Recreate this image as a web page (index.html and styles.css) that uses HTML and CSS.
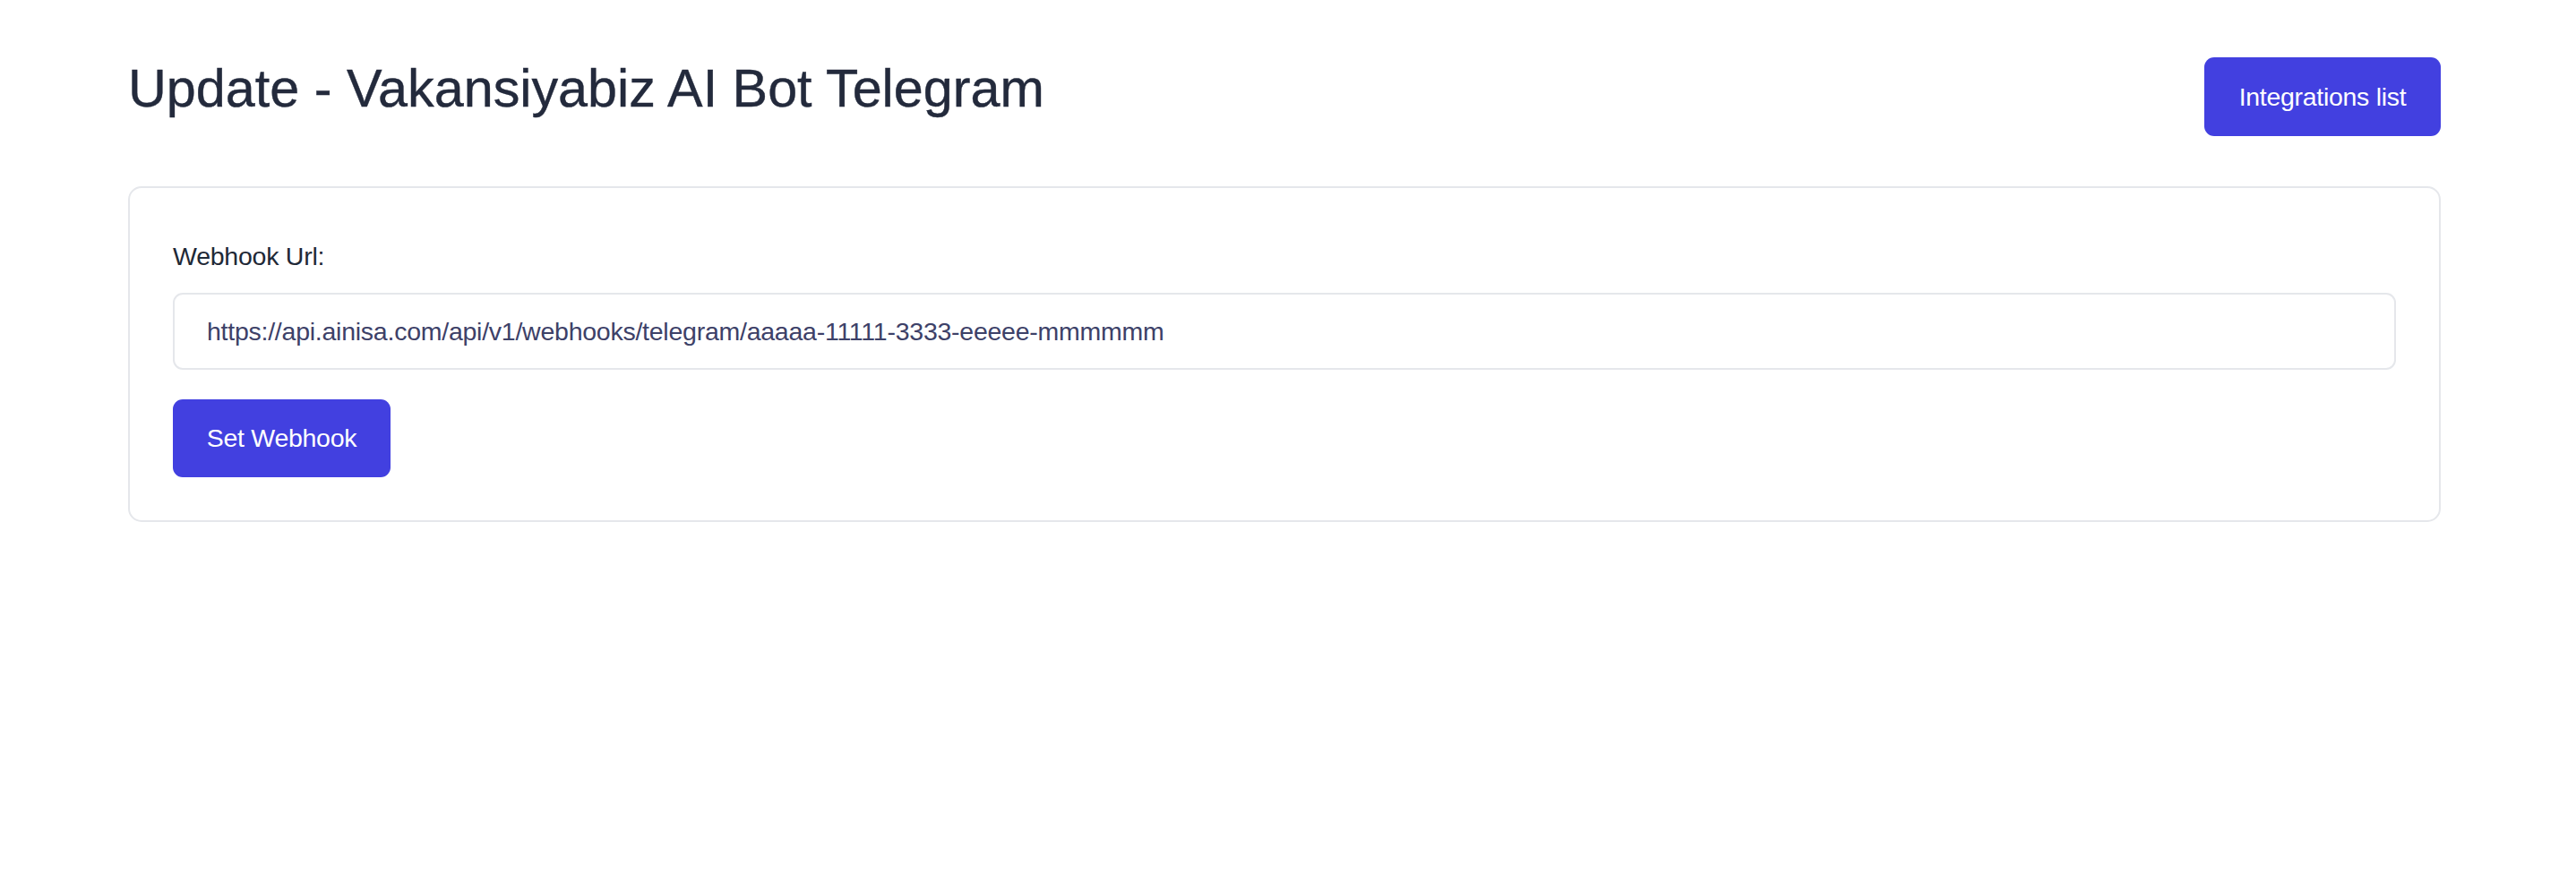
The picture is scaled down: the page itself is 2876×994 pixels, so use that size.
FILE: index.html
```html
<!DOCTYPE html>
<html lang="en">
<head>
<meta charset="utf-8">
<title>Update - Vakansiyabiz AI Bot Telegram</title>
<link rel="stylesheet" href="styles.css">
</head>
<body>
<main class="page">
  <header class="page-header">
    <h1 class="page-title">Update - Vakansiyabiz AI Bot Telegram</h1>
    <a class="btn btn-header" href="#">Integrations list</a>
  </header>
  <section class="card">
    <form class="webhook-form" onsubmit="return false;">
      <label class="field-label" for="webhook">Webhook Url:</label>
      <input class="field-input" id="webhook" type="text" value="https://api.ainisa.com/api/v1/webhooks/telegram/aaaaa-11111-3333-eeeee-mmmmmm">
      <div class="form-actions">
        <button class="btn btn-submit" type="submit">Set Webhook</button>
      </div>
    </form>
  </section>
</main>
</body>
</html>
```

FILE: styles.css
```css
* {
  box-sizing: border-box;
}

html, body {
  margin: 0;
  padding: 0;
  background: #ffffff;
}

body {
  font-family: "Liberation Sans", Arial, sans-serif;
  color: #1f2937;
}

.page {
  padding: 64px 151px 0 143px;
}

.page-header {
  display: flex;
  justify-content: space-between;
  align-items: flex-start;
}

.page-title {
  margin: 6px 0 0 0;
  font-size: 59.3px;
  line-height: 58.7px;
  font-weight: 400;
  color: #232a3c;
  letter-spacing: 0;
  -webkit-text-stroke: 0.4px #232a3c;
}

.btn {
  display: inline-flex;
  align-items: center;
  justify-content: center;
  background: #4240e0;
  color: #ffffff;
  border: none;
  border-radius: 11px;
  font-family: "Liberation Sans", Arial, sans-serif;
  font-size: 28.5px;
  letter-spacing: -0.3px;
  text-decoration: none;
  cursor: pointer;
}

.btn-header {
  width: 264px;
  height: 88px;
  padding: 0;
}

.card {
  margin-top: 56px;
  border: 2px solid #e5e7eb;
  border-radius: 15px;
  padding: 48px;
}

.webhook-form {
  display: flex;
  flex-direction: column;
}

.field-label {
  display: block;
  margin: 6px 0 19px 0;
  font-size: 28.5px;
  letter-spacing: -0.25px;
  line-height: 44px;
  color: #1f2937;
}

.field-input {
  display: block;
  width: 100%;
  height: 86px;
  padding: 0 36px;
  border: 2px solid #e5e7eb;
  border-radius: 11px;
  font-family: "Liberation Sans", Arial, sans-serif;
  font-size: 28.5px;
  letter-spacing: -0.25px;
  color: #3d4168;
  background: #ffffff;
  outline: none;
}

.form-actions {
  margin-top: 33px;
}

.btn-submit {
  width: 243px;
  height: 87px;
  padding: 0;
}
```
